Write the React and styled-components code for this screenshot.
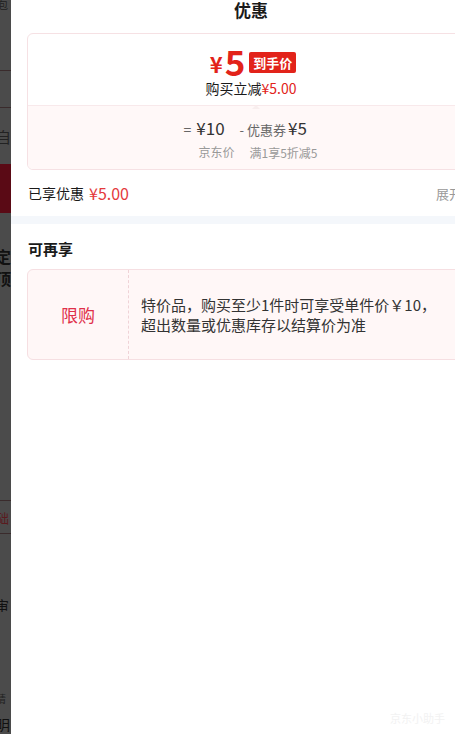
import React from "react";
import styled, { createGlobalStyle } from "styled-components";

const GlobalStyle = createGlobalStyle`
  html, body {
    margin: 0;
    padding: 0;
    background: #fff;
  }
  body {
    font-family: "Noto Sans CJK SC", "Noto Sans", sans-serif;
    color: #1a1a1a;
  }
`;

const Screen = styled.div`
  width: 455px;
  height: 734px;
  display: flex;
  overflow: hidden;
`;

/* dimmed page behind the drawer */
const Backdrop = styled.div`
  width: 11px;
  flex-shrink: 0;
  background: #4b4b4b;
  overflow: hidden;
  display: flex;
  flex-direction: column;
`;

const BackRow = styled.div`
  height: ${(p) => p.h}px;
  flex-shrink: 0;
  border-bottom: ${(p) => (p.line ? "1px solid #3a2b2c" : "none")};
  background: ${(p) => p.bg || "transparent"};
  display: flex;
  align-items: ${(p) => p.align || "center"};
  font-size: ${(p) => p.size || 14}px;
  font-weight: ${(p) => (p.bold ? 700 : 400)};
  color: ${(p) => p.color || "#1e1e1e"};
  line-height: 1;
  white-space: nowrap;
  overflow: hidden;
  margin-left: ${(p) => p.pl || 0}px;
`;

const Panel = styled.div`
  width: 480px;
  flex-shrink: 0;
  background: #fff;
  display: flex;
  flex-direction: column;
`;

const Title = styled.div`
  text-align: center;
  font-size: 17px;
  font-weight: 700;
  line-height: 20px;
  color: #1a1a1a;
`;

const Card = styled.div`
  margin: 13px 16px 0;
  border: 1px solid #f6e1e4;
  border-radius: 6px;
  overflow: hidden;
`;

const CardTop = styled.div`
  height: 71px;
  box-sizing: border-box;
  padding-top: 10px;
  display: flex;
  flex-direction: column;
  align-items: center;
`;

const PriceRow = styled.div`
  height: 34px;
  display: flex;
  align-items: center;
  color: #e2231a;
  font-weight: 700;
  margin-left: 4px;
  margin-bottom: 1px;
`;

const Yen = styled.span`
  font-size: 22px;
  line-height: 28px;
  margin-right: 2px;
  margin-top: 3px;
`;

const BigNum = styled.span`
  font-size: 35px;
  line-height: 34px;
`;

const Badge = styled.span`
  margin-left: 4px;
  height: 21px;
  padding: 0 4px;
  background: #e2231a;
  color: #fff;
  font-size: 13px;
  line-height: 21px;
  border-radius: 2px;
  margin-top: 3px;
`;

const SubLine = styled.div`
  font-size: 14px;
  line-height: 18px;
  color: #1a1a1a;
`;

const Red = styled.span`
  color: ${(p) => p.color || "#e4393c"};
  font-size: ${(p) => (p.size ? `${p.size}px` : "inherit")};
`;

const CardBottom = styled.div`
  position: relative;
  height: 64px;
  box-sizing: border-box;
  border-top: 1px solid #f8e9eb;
  background: #fff8f8;
  padding: 11px 0 0 14px;
  display: flex;
  justify-content: center;
  gap: 15px;

  &::before {
    content: "";
    position: absolute;
    top: -5px;
    left: 224px;
    border: 4px solid transparent;
    border-bottom-color: #f8eeee;
  }
`;

const Formula = styled.div`
  display: flex;
  flex-direction: column;
  align-items: flex-start;
`;

const Value = styled.div`
  display: flex;
  align-items: baseline;
  font-size: 17px;
  line-height: 22px;
  color: #333;
  margin-left: ${(p) => p.pull || 0}px;
`;

const Op = styled.span`
  font-size: ${(p) => p.size || 14}px;
  color: #666;
  margin-right: ${(p) => p.gap || 5}px;
`;

const Label = styled.div`
  margin-top: 4px;
  font-size: 12px;
  line-height: 16px;
  color: #999;
`;

const SavedRow = styled.div`
  height: 46px;
  padding: 0 16px 0 17px;
  display: flex;
  align-items: center;
  justify-content: space-between;
`;

const SavedText = styled.div`
  font-size: 14px;
  color: #1a1a1a;
  display: flex;
  align-items: center;
  gap: 5px;
`;

const Expand = styled.div`
  font-size: 13px;
  color: #999;
  display: flex;
  align-items: center;
  gap: 3px;
`;

const Band = styled.div`
  height: 8px;
  background: #f4f7fb;
`;

const Section = styled.div`
  padding: 15px 16px 0;
`;

const SectionTitle = styled.div`
  font-size: 15px;
  font-weight: 700;
  line-height: 20px;
  color: #1a1a1a;
  margin-bottom: 10px;
  padding-left: 1px;
`;

const RuleCard = styled.div`
  height: 91px;
  box-sizing: border-box;
  border: 1px solid #f6dfe2;
  border-radius: 6px;
  background: #fff7f7;
  display: flex;
`;

const RuleTag = styled.div`
  width: 100px;
  flex-shrink: 0;
  border-right: 1px dashed #efd3d7;
  display: flex;
  align-items: center;
  justify-content: center;
  font-size: 17px;
  color: #e0304a;
`;

const RuleText = styled.div`
  padding: 0 12px;
  display: flex;
  align-items: center;
  font-size: 15px;
  line-height: 20px;
  color: #333;
  white-space: nowrap;
`;

const Footer = styled.div`
  margin-top: auto;
  padding: 0 46px 8px 0;
  display: flex;
  justify-content: flex-end;
  font-size: 11px;
  color: #f2f2f2;
`;

function Chevron() {
  return (
    <svg width="10" height="10" viewBox="0 0 10 10" fill="none">
      <path d="M2 3.5 L5 6.5 L8 3.5" stroke="#999" strokeWidth="1.2" />
    </svg>
  );
}

export default function App() {
  return (
    <>
      <GlobalStyle />
      <Screen>
        <Backdrop>
          <BackRow h={70} line align="flex-start" size={10} pl={-2}>
            包
          </BackRow>
          <BackRow h={36} line />
          <BackRow h={56} size={15} color="#222" pl={-4}>
            自
          </BackRow>
          <BackRow h={49} bg="#5a0a15" />
          <BackRow h={31} />
          <BackRow h={23} size={16} bold color="#111" pl={-5}>
            定
          </BackRow>
          <BackRow h={21} size={16} bold color="#111" pl={-5}>
            顶
          </BackRow>
          <BackRow h={212} line />
          <BackRow h={32} line size={13} color="#5a1a1e" pl={-4}>
            础
          </BackRow>
          <BackRow h={78} align="flex-end" size={14} color="#111" pl={-5}>
            审
          </BackRow>
          <BackRow h={92} align="flex-end" size={10} color="#222" pl={-4}>
            请
          </BackRow>
          <BackRow h={28} align="flex-end" size={15} color="#111" pl={-5}>
            明
          </BackRow>
        </Backdrop>

        <Panel>
          <Title>优惠</Title>

          <Card>
            <CardTop>
              <PriceRow>
                <Yen>¥</Yen>
                <BigNum>5</BigNum>
                <Badge>到手价</Badge>
              </PriceRow>
              <SubLine>
                购买立减<Red color="#e2231a">¥5.00</Red>
              </SubLine>
            </CardTop>
            <CardBottom>
              <Formula>
                <Value pull={-15}>
                  <Op>=</Op>¥10
                </Value>
                <Label>京东价</Label>
              </Formula>
              <Formula>
                <Value pull={-10}>
                  <Op size={13} gap={3}>
                    -
                  </Op>
                  <Op size={13} gap={2}>
                    优惠券
                  </Op>
                  ¥5
                </Value>
                <Label>满1享5折减5</Label>
              </Formula>
            </CardBottom>
          </Card>

          <SavedRow>
            <SavedText>
              已享优惠<Red size={16}>¥5.00</Red>
            </SavedText>
            <Expand>
              展开
              <Chevron />
            </Expand>
          </SavedRow>

          <Band />

          <Section>
            <SectionTitle>可再享</SectionTitle>
            <RuleCard>
              <RuleTag>限购</RuleTag>
              <RuleText>
                特价品，购买至少1件时可享受单件价￥10，
                <br />
                超出数量或优惠库存以结算价为准
              </RuleText>
            </RuleCard>
          </Section>

          <Footer>京东小助手</Footer>
        </Panel>
      </Screen>
    </>
  );
}
